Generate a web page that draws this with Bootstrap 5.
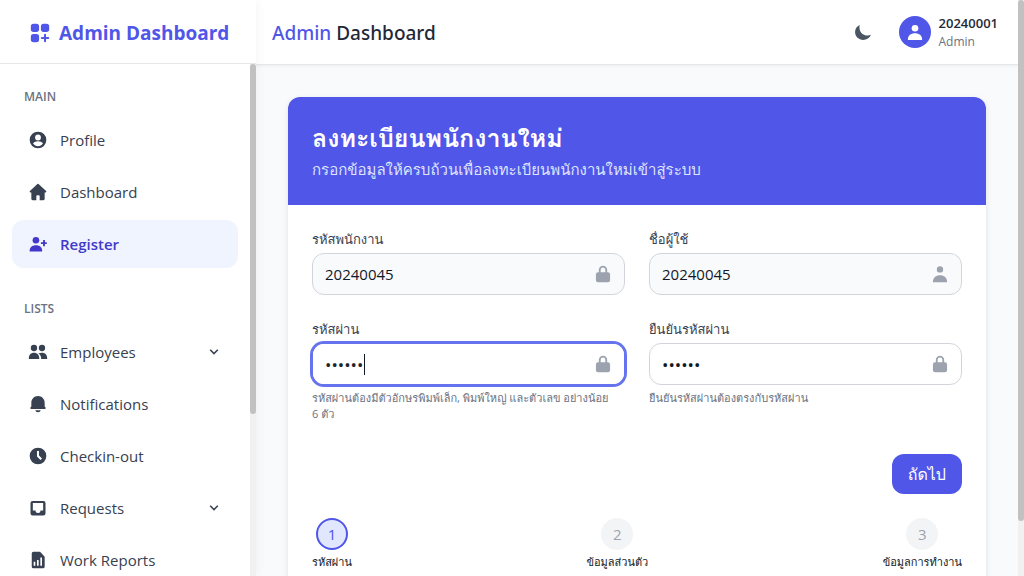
<!DOCTYPE html>
<html lang="th">
<head>
<meta charset="utf-8">
<meta name="viewport" content="width=device-width, initial-scale=1">
<title>Admin Dashboard</title>
<link href="https://cdn.jsdelivr.net/npm/bootstrap@5.3.0/dist/css/bootstrap.min.css" rel="stylesheet">
<style>
:root{--brand:#4f56e8;--ink:#374151;--muted:#6b7280}
html{scrollbar-width:none}
body{font-family:"Open Sans","Loma","Waree","Garuda","Noto Sans Thai Looped","Noto Sans Thai",sans-serif;font-size:15px;line-height:24px;color:#111827;background:#f9fafc}
svg{fill:currentColor;flex:none;display:block}
.icon{width:20px;height:20px}
.chev{width:18px;height:18px}
.rail{width:6px;background:#f1f1f1}
.rail-thumb{background:#c1c1c1;border-radius:3px}
.sidebar{width:256px;box-shadow:0 0 10px rgba(0,0,0,.06);z-index:30}
.brandbar{height:64px;padding:2px 29px 0;color:var(--brand);font-size:19px;font-weight:700;border-color:#e5e7eb!important}
.brandbar .icon{width:22px;height:22px}
.sidescroll{min-height:0}
.sidelist{padding:20px 12px 32px}
.group-title{font-size:12px;line-height:16px;font-weight:600;color:var(--muted);padding:5px 12px;margin:0 0 6px}
.side-group{margin-bottom:28px}
.side-link{height:48px;padding:0 15px 0 16px;border-radius:12px;color:var(--ink);text-decoration:none}
.side-link:hover,.side-link.active{background:#eff4ff;color:#4338ca}
.side-link.active{font-weight:600}
.topbar{height:65px;padding:0 20px 0 16px;border-color:#e5e7eb!important;box-shadow:0 1px 3px rgba(0,0,0,.06);z-index:20}
.topbar h1{font-family:"Noto Sans","Open Sans",sans-serif;font-size:19px;line-height:28px;font-weight:500;color:#1f2937;padding-top:2px}
.brand-ink{color:var(--brand)}
.theme-btn{color:#4b5563;width:40px;height:40px}
.avatar{width:32px;height:32px;background:var(--brand)}
.user-id{font-size:13px;line-height:20px;font-weight:600;color:#1f2937}
.user-role{font-size:12px;line-height:18px;color:var(--muted)}
.page{padding:32px}
.form-card{border-radius:12px;box-shadow:0 2px 6px rgba(0,0,0,.1)}
.form-head{padding:24px;background:var(--brand)}
.form-head h2{font-size:25px;line-height:32px;font-weight:700}
.form-head p{font-size:15px;color:#dfe5fe}
.form-area{padding:24px 24px 36px}
.field-label{font-size:13px;line-height:20px;color:var(--ink);font-weight:500;margin-bottom:4px}
.field{height:42px;border-radius:12px;border-color:#d1d5db;padding:8px 40px 8px 12px;font-size:15px;line-height:24px;color:#111827;transition:none}
.field[type=password]{font-size:17px}
.field[readonly]{background:#f9fafc}
.field:focus,.field.current{border-color:transparent;box-shadow:0 0 0 2px #6574ee;caret-color:transparent}
.field-icon{right:12px;color:#9ca3af}
.caret-bar{left:52px;width:1px;height:21px;background:#111827}
.hint{font-size:11px;line-height:16px;color:var(--muted);margin-top:5px}
.next-btn{height:40px;padding:0 15px;border-radius:12px;font-size:16px;font-weight:500;background:var(--brand);color:#fff}
.step-dot{width:32px;height:32px;background:#f3f4f6;color:#9ca3af}
.step-dot.on{background:#e0e7ff;color:var(--brand);border:2px solid var(--brand)}
.step-name{font-size:11px;line-height:16px}
</style>
</head>
<body>
<div class="d-flex min-vh-100">
<aside class="sidebar sticky-top vh-100 bg-white d-flex flex-column flex-shrink-0">
  <div class="brandbar d-flex align-items-center gap-2 border-bottom flex-shrink-0 text-nowrap">
    <svg class="icon" viewBox="0 0 24 24"><rect x="2" y="2" width="9" height="9" rx="3"/><rect x="13" y="2" width="9" height="9" rx="3"/><rect x="2" y="13" width="9" height="9" rx="3"/><path d="M16.400 14a1.100 1.100 0 0 1 2.200 0v2.400H21a1.100 1.100 0 0 1 0 2.200h-2.400V21a1.100 1.100 0 0 1-2.200 0v-2.400H14a1.100 1.100 0 0 1 0-2.200h2.400z"/></svg>
    <span>Admin Dashboard</span>
  </div>
  <div class="sidescroll d-flex flex-grow-1">
  <nav class="overflow-hidden flex-grow-1">
    <div class="sidelist">
      <div class="side-group">
        <p class="group-title">MAIN</p>
        <div class="d-flex flex-column gap-1">
          <a href="#" class="side-link d-flex align-items-center"><svg class="icon me-2" viewBox="0 0 24 24"><path fill-rule="evenodd" d="M12 2a10 10 0 1 0 0 20 10 10 0 0 0 0-20zm0 3.500a3.500 3.500 0 1 1 0 7 3.500 3.500 0 0 1 0-7zM6 16.200c1.200-1.900 3.500-2.700 6-2.700s4.800.8 6 2.700a7.200 7.200 0 0 1-12 0z"/></svg><span class="ms-1">Profile</span></a>
          <a href="#" class="side-link d-flex align-items-center"><svg class="icon me-2" viewBox="0 0 24 24"><path d="m21.700 10.700-9-8.400a1 1 0 0 0-1.400 0l-9 8.400c-.7.7-.2 1.800.7 1.800h1V20a2 2 0 0 0 2 2h4v-5a1 1 0 0 1 1-1h2a1 1 0 0 1 1 1v5h4a2 2 0 0 0 2-2v-7.500h1c.9 0 1.400-1.100.7-1.800z"/></svg><span class="ms-1">Dashboard</span></a>
          <a href="#" class="side-link active d-flex align-items-center"><svg class="icon me-2" viewBox="0 0 24 24"><circle cx="9.500" cy="7.500" r="4"/><path d="M2 21v-1c0-3.900 2.900-6.500 7.500-6.500S17 16.100 17 20v1zM15.500 9.800h2.600V7.200h2.200v2.600h2.200V12h-2.200v2.600h-2.200V12h-2.600z"/></svg><span class="ms-1">Register</span></a>
        </div>
      </div>
      <div class="side-group">
        <p class="group-title">LISTS</p>
        <div class="d-flex flex-column gap-1">
          <a href="#" class="side-link d-flex align-items-center"><svg class="icon me-2" viewBox="0 0 24 24"><circle cx="7.200" cy="7.200" r="3.800"/><circle cx="16.800" cy="7.200" r="3.800"/><path d="M1 20.500v-1C1 15.500 3.500 13 7.200 13s6.300 2.500 6.300 6.500v1zM12.500 13.900c1.200-.6 2.700-.9 4.300-.9 3.800 0 6.200 2.500 6.200 6.500v1h-7.200c.1-3-1-5.200-3.300-6.600z"/></svg><span class="ms-1">Employees</span><svg class="chev ms-auto" viewBox="0 0 24 24"><path d="M16.300 8.300 12 12.600 7.700 8.300 6.200 9.800 12 15.500l5.800-5.700z"/></svg></a>
          <a href="#" class="side-link d-flex align-items-center"><svg class="icon me-2" viewBox="0 0 24 24"><path d="M12 22a3.300 3.300 0 0 0 3.300-2.500H8.700A3.300 3.300 0 0 0 12 22zM20 15V10.500C20 6 16.500 2.500 12 2.500S4 6 4 10.500V15l-1 1v2h18v-2z"/></svg><span class="ms-1">Notifications</span></a>
          <a href="#" class="side-link d-flex align-items-center"><svg class="icon me-2" viewBox="0 0 24 24"><path fill-rule="evenodd" d="M12 2a10 10 0 1 0 0 20 10 10 0 0 0 0-20zm3 14.900L10.800 12.600V6h2.400v5.500l3.600 3.600z"/></svg><span class="ms-1">Checkin-out</span></a>
          <a href="#" class="side-link d-flex align-items-center"><svg class="icon me-2" viewBox="0 0 24 24"><path fill-rule="evenodd" d="M5.500 3.500h13a2.500 2.500 0 0 1 2.500 2.500v12.500a2.500 2.500 0 0 1-2.500 2.500h-13A2.500 2.500 0 0 1 3 18.500V6a2.500 2.500 0 0 1 2.500-2.500zm.3 2.500v9h3.200a3 3 0 0 0 6 0h3.200V6z"/></svg><span class="ms-1">Requests</span><svg class="chev ms-auto" viewBox="0 0 24 24"><path d="M16.300 8.300 12 12.600 7.700 8.300 6.200 9.800 12 15.500l5.800-5.700z"/></svg></a>
          <a href="#" class="side-link d-flex align-items-center"><svg class="icon me-2" viewBox="0 0 24 24"><path fill-rule="evenodd" d="M6 2h8.500L20 8v12a2 2 0 0 1-2 2H6.500a2 2 0 0 1-2-2V4a2 2 0 0 1 2-2zm.8 12v5h2v-5zm4-2v7h2v-7zm4-3v10h2V9z"/></svg><span class="ms-1">Work Reports</span></a>
        </div>
      </div>
    </div>
  </nav>
  <div class="rail flex-shrink-0"><div class="rail-thumb" style="height:68.4%"></div></div>
  </div>
</aside>

<div class="flex-grow-1">
  <header class="topbar sticky-top bg-white border-bottom d-flex align-items-center">
    <h1 class="mb-0"><span class="brand-ink">Admin</span> Dashboard</h1>
    <button type="button" class="theme-btn btn p-0 ms-auto d-flex align-items-center justify-content-center border-0" aria-label="Dark mode"><svg class="icon" viewBox="0 0 24 24"><path d="M8 3.500C4.600 5 2.500 8.300 2.500 12c0 5.500 4.500 9.500 9.700 9.500 4.200 0 7.800-2.300 9.300-6.200C14.500 18.500 6 13 8 3.500z"/></svg></button>
    <div class="d-flex align-items-center gap-2 ms-3">
      <span class="avatar rounded-circle text-white d-flex align-items-center justify-content-center"><svg class="icon" viewBox="0 0 24 24"><circle cx="12" cy="7.500" r="4"/><path d="M3.500 21.500v-1c0-4.300 3.500-7 8.500-7s8.500 2.700 8.500 7v1z"/></svg></span>
      <div><div class="user-id">20240001</div><div class="user-role">Admin</div></div>
    </div>
  </header>

  <main class="page">
    <form class="form-card bg-white overflow-hidden">
      <div class="form-head text-white">
        <h2 class="mb-1">ลงทะเบียนพนักงานใหม่</h2>
        <p class="mb-0">กรอกข้อมูลให้ครบถ้วนเพื่อลงทะเบียนพนักงานใหม่เข้าสู่ระบบ</p>
      </div>
      <div class="form-area">
        <div class="row g-4">
          <div class="col-6">
            <label class="field-label d-block" for="emp">รหัสพนักงาน</label>
            <div class="position-relative d-flex align-items-center"><input id="emp" class="form-control field" value="20240045" readonly><svg class="icon field-icon position-absolute" viewBox="0 0 24 24"><path fill-rule="evenodd" d="M12 2a5 5 0 0 0-5 5v3H6a2.500 2.500 0 0 0-2.500 2.500v7A2.500 2.500 0 0 0 6 22h12a2.500 2.500 0 0 0 2.500-2.500v-7A2.500 2.500 0 0 0 18 10h-1V7a5 5 0 0 0-5-5zM9.200 10V7a2.800 2.800 0 0 1 5.600 0v3z"/></svg></div>
          </div>
          <div class="col-6">
            <label class="field-label d-block" for="usr">ชื่อผู้ใช้</label>
            <div class="position-relative d-flex align-items-center"><input id="usr" class="form-control field" value="20240045" readonly><svg class="icon field-icon position-absolute" viewBox="0 0 24 24"><circle cx="12" cy="6.500" r="3.800"/><path d="M3.500 22v-1c0-4.300 3.500-7.500 8.500-7.500s8.500 3.200 8.500 7.500v1z"/></svg></div>
          </div>
          <div class="col-6">
            <label class="field-label d-block" for="pw">รหัสผ่าน</label>
            <div class="position-relative d-flex align-items-center"><input id="pw" type="password" class="form-control field current" value="Abc123" autofocus><span class="caret-bar position-absolute"></span><svg class="icon field-icon position-absolute" viewBox="0 0 24 24"><path fill-rule="evenodd" d="M12 2a5 5 0 0 0-5 5v3H6a2.500 2.500 0 0 0-2.500 2.500v7A2.500 2.500 0 0 0 6 22h12a2.500 2.500 0 0 0 2.500-2.500v-7A2.500 2.500 0 0 0 18 10h-1V7a5 5 0 0 0-5-5zM9.200 10V7a2.800 2.800 0 0 1 5.600 0v3z"/></svg></div>
            <p class="hint mb-0">รหัสผ่านต้องมีตัวอักษรพิมพ์เล็ก, พิมพ์ใหญ่ และตัวเลข อย่างน้อย 6&nbsp;ตัว</p>
          </div>
          <div class="col-6">
            <label class="field-label d-block" for="pw2">ยืนยันรหัสผ่าน</label>
            <div class="position-relative d-flex align-items-center"><input id="pw2" type="password" class="form-control field" value="Abc123"><svg class="icon field-icon position-absolute" viewBox="0 0 24 24"><path fill-rule="evenodd" d="M12 2a5 5 0 0 0-5 5v3H6a2.500 2.500 0 0 0-2.500 2.500v7A2.500 2.500 0 0 0 6 22h12a2.500 2.500 0 0 0 2.500-2.500v-7A2.500 2.500 0 0 0 18 10h-1V7a5 5 0 0 0-5-5zM9.200 10V7a2.800 2.800 0 0 1 5.600 0v3z"/></svg></div>
            <p class="hint mb-0">ยืนยันรหัสผ่านต้องตรงกับรหัสผ่าน</p>
          </div>
        </div>
        <div class="d-flex justify-content-end mt-4 pt-2"><button type="button" class="btn next-btn">ถัดไป</button></div>
        <div class="d-flex justify-content-between mt-4">
          <div class="d-flex flex-column align-items-center gap-1"><span class="step-dot on rounded-circle d-flex align-items-center justify-content-center">1</span><span class="step-name">รหัสผ่าน</span></div>
          <div class="d-flex flex-column align-items-center gap-1"><span class="step-dot rounded-circle d-flex align-items-center justify-content-center">2</span><span class="step-name">ข้อมูลส่วนตัว</span></div>
          <div class="d-flex flex-column align-items-center gap-1"><span class="step-dot rounded-circle d-flex align-items-center justify-content-center">3</span><span class="step-name">ข้อมูลการทำงาน</span></div>
        </div>
      </div>
    </form>
  </main>
</div>
<div class="rail sticky-top vh-100 flex-shrink-0"><div class="rail-thumb" style="height:90.5%"></div></div>
</div>
<script src="https://cdn.jsdelivr.net/npm/bootstrap@5.3.0/dist/js/bootstrap.bundle.min.js"></script>
</body>
</html>
